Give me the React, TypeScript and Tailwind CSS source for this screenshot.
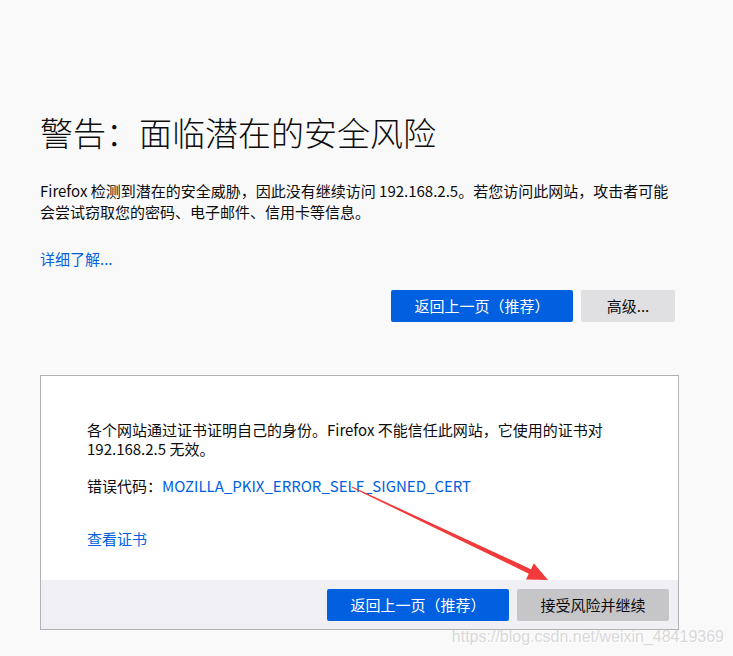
import React from "react";

const font = { fontFamily: '"Noto Sans CJK SC", "Noto Sans", sans-serif' };

export default function App() {
  return (
    <div
      className="relative h-[656px] w-full overflow-hidden bg-[#f9f9fa] text-[#0c0c0d]"
      style={font}
    >
      <div className="pl-[40px] pt-[112px]">
        <div className="w-[635px]">
          <h1 className="text-[33px] font-light leading-[40px] tracking-[0px]">
            警告：面临潜在的安全风险
          </h1>
          <p className="mt-[28px] text-[15px] leading-[21px]">
            Firefox 检测到潜在的安全威胁，因此没有继续访问 192.168.2.5。若您访问此网站，攻击者可能会尝试窃取您的密码、电子邮件、信用卡等信息。
          </p>
          <a className="mt-[26px] block text-[15px] leading-[21px] text-[#0060df]">
            详细了解...
          </a>
          <div className="mt-[21px] flex justify-end gap-[8px]">
            <button className="h-[32px] w-[182px] rounded-[2px] bg-[#0060df] text-[15px] text-white">
              返回上一页（推荐）
            </button>
            <button className="h-[32px] w-[94px] rounded-[2px] bg-[#e0e0e2] text-[15px] text-[#0c0c0d]">
              高级...
            </button>
          </div>
        </div>
        <div className="mt-[53px] flex h-[255px] w-[639px] flex-col border border-[#b1b1b3] bg-white">
          <div className="flex-1 px-[46px] pt-[44px]">
            <p className="text-[15px] leading-[19px]">
              各个网站通过证书证明自己的身份。Firefox 不能信任此网站，它使用的证书对 192.168.2.5 无效。
            </p>
            <p className="mt-[18px] text-[15px] leading-[20px]">
              错误代码：<span className="text-[#0060df]">MOZILLA_PKIX_ERROR_SELF_SIGNED_CERT</span>
            </p>
            <a className="mt-[33px] block text-[15px] leading-[20px] text-[#0060df]">
              查看证书
            </a>
          </div>
          <div className="flex h-[49px] justify-end gap-[8px] bg-[#f0f0f4] px-[9px] pt-[9px]">
            <button className="h-[32px] w-[182px] rounded-[2px] bg-[#0060df] text-[15px] text-white">
              返回上一页（推荐）
            </button>
            <button className="h-[32px] w-[152px] rounded-[2px] bg-[#c6c6c9] text-[15px] text-[#0c0c0d]">
              接受风险并继续
            </button>
          </div>
        </div>
      </div>

      <svg
        className="pointer-events-none absolute left-0 top-0"
        width="733"
        height="656"
        viewBox="0 0 733 656"
      >
        <polygon
          points="352,486.5 531,569.2 533.8,563.3 548,580 526,579.5 528.8,573.7 351.6,487.5"
          fill="#f23a3a"
        />
      </svg>

      <div
        className="pointer-events-none absolute right-[9px] top-[627px] text-[16px] leading-[20px] text-[#d8d8d8]"
        style={{
          fontFamily: '"Liberation Sans", Arial, sans-serif',
          textShadow: "0 0 1px #ffffff, 1px 1px 0 #ffffff",
        }}
      >
        https://blog.csdn.net/weixin_48419369
      </div>
    </div>
  );
}
